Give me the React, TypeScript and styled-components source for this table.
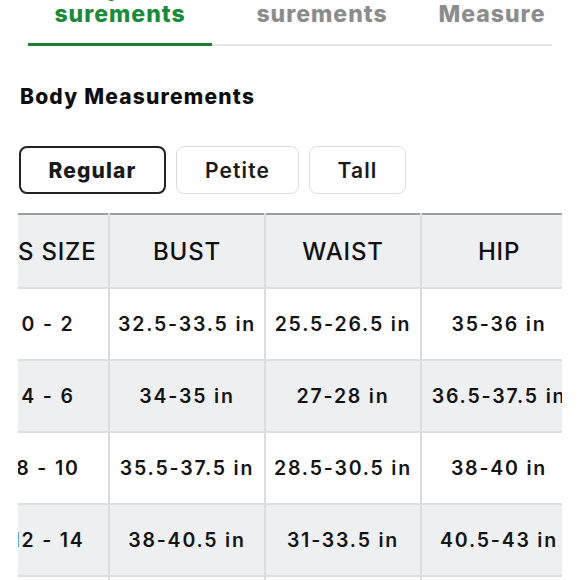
import React, { useLayoutEffect, useRef } from "react";
import styled, { createGlobalStyle, css } from "styled-components";

const GlobalStyle = createGlobalStyle`
  body {
    margin: 0;
    background: #ffffff;
    font-family: Inter, "Liberation Sans", sans-serif;
    color: #141414;
    overflow: hidden;
  }
`;

const Page = styled.div`
  padding: 0 18px;
  height: 580px;
  overflow: hidden;
`;

// Tab strip: only the second line of each label is visible in the viewport.
const TabBar = styled.div`
  display: flex;
  margin: -25px 10px 0;
`;

const Tab = styled.div<{ $active?: boolean; $width: number }>`
  width: ${({ $width }) => $width}px;
  text-align: center;
  font-size: 23px;
  line-height: 26px;
  font-weight: 800;
  letter-spacing: 1px;
  padding-bottom: 17px;
  border-bottom: 2px solid #e6e6e6;
  color: #8c8c8c;
  ${({ $active }) =>
    $active &&
    css`
      color: #1b8a3a;
      padding-bottom: 16px;
      border-bottom: 3px solid #1b7f37;
    `}
`;

const Heading = styled.h2`
  margin: 37px 0 0 2px;
  font-size: 21px;
  line-height: 28px;
  font-weight: 800;
  letter-spacing: 1.2px;
  color: #0d0d0d;
`;

const FitGroup = styled.div`
  display: flex;
  gap: 10px;
  margin: 35px 0 0 1px;
`;

const FitButton = styled.button<{ $selected?: boolean; $width: number }>`
  width: ${({ $width }) => $width}px;
  height: 48px;
  border-radius: 8px;
  background: #ffffff;
  font-family: inherit;
  font-size: 21px;
  letter-spacing: 1.1px;
  color: #1a1a1a;
  font-weight: 600;
  border: 1.5px solid #dcdcdc;
  ${({ $selected }) =>
    $selected &&
    css`
      font-weight: 800;
      border: 2px solid #222222;
    `}
`;

const TableScroll = styled.div`
  margin-top: 19px;
  overflow: hidden;
`;

const Table = styled.table`
  border-collapse: collapse;
  table-layout: fixed;
  width: 582px;
`;

const HeadCell = styled.th<{ $width: number }>`
  width: ${({ $width }) => $width}px;
  height: 72px;
  padding: 0;
  background: #eeeff1;
  border-top: 2px solid #9e9e9e;
  border-left: 2px solid #dddddd;
  border-right: 2px solid #dddddd;
  border-bottom: 2px solid #dddddd;
  font-size: 24px;
  font-weight: 500;
  letter-spacing: 0.8px;
  color: #111111;
  white-space: nowrap;
`;

const Row = styled.tr<{ $shaded?: boolean }>`
  background: ${({ $shaded }) => ($shaded ? "#eeeff1" : "#ffffff")};
`;

const Cell = styled.td`
  height: 70px;
  padding: 0;
  text-align: center;
  border: 2px solid #dddddd;
  font-size: 19.5px;
  font-weight: 600;
  letter-spacing: 1.8px;
  color: #141414;
  white-space: nowrap;
`;

const tabs = [
  { top: "Body Mea", bottom: "surements", width: 184, active: true },
  { top: "Garment Mea", bottom: "surements", width: 220 },
  { top: "How to", bottom: "Measure", width: 120 },
];

const fits = [
  { label: "Regular", width: 147, selected: true },
  { label: "Petite", width: 123 },
  { label: "Tall", width: 97 },
];

const columns = [
  { label: "US SIZE", width: 120 },
  { label: "BUST", width: 154 },
  { label: "WAIST", width: 154 },
  { label: "HIP", width: 154 },
];

const rows = [
  ["0 - 2", "32.5-33.5 in", "25.5-26.5 in", "35-36 in"],
  ["4 - 6", "34-35 in", "27-28 in", "36.5-37.5 in"],
  ["8 - 10", "35.5-37.5 in", "28.5-30.5 in", "38-40 in"],
  ["12 - 14", "38-40.5 in", "31-33.5 in", "40.5-43 in"],
  ["16 - 18", "41.5-44 in", "34.5-37 in", "44-46.5 in"],
];

export default function App() {
  const scrollRef = useRef<HTMLDivElement>(null);

  // The table is shown scrolled a little to the right.
  useLayoutEffect(() => {
    if (scrollRef.current) scrollRef.current.scrollLeft = 32;
  }, []);

  return (
    <Page>
      <GlobalStyle />
      <TabBar>
        {tabs.map((tab) => (
          <Tab key={tab.bottom + tab.width} $active={tab.active} $width={tab.width}>
            {tab.top}
            <br />
            {tab.bottom}
          </Tab>
        ))}
      </TabBar>

      <Heading>Body Measurements</Heading>

      <FitGroup>
        {fits.map((fit) => (
          <FitButton key={fit.label} $selected={fit.selected} $width={fit.width}>
            {fit.label}
          </FitButton>
        ))}
      </FitGroup>

      <TableScroll ref={scrollRef}>
        <Table>
          <thead>
            <tr>
              {columns.map((col) => (
                <HeadCell key={col.label} $width={col.width}>
                  {col.label}
                </HeadCell>
              ))}
            </tr>
          </thead>
          <tbody>
            {rows.map((row, i) => (
              <Row key={row[0]} $shaded={i % 2 === 1}>
                {row.map((value, j) => (
                  <Cell key={j}>{value}</Cell>
                ))}
              </Row>
            ))}
          </tbody>
        </Table>
      </TableScroll>
    </Page>
  );
}
